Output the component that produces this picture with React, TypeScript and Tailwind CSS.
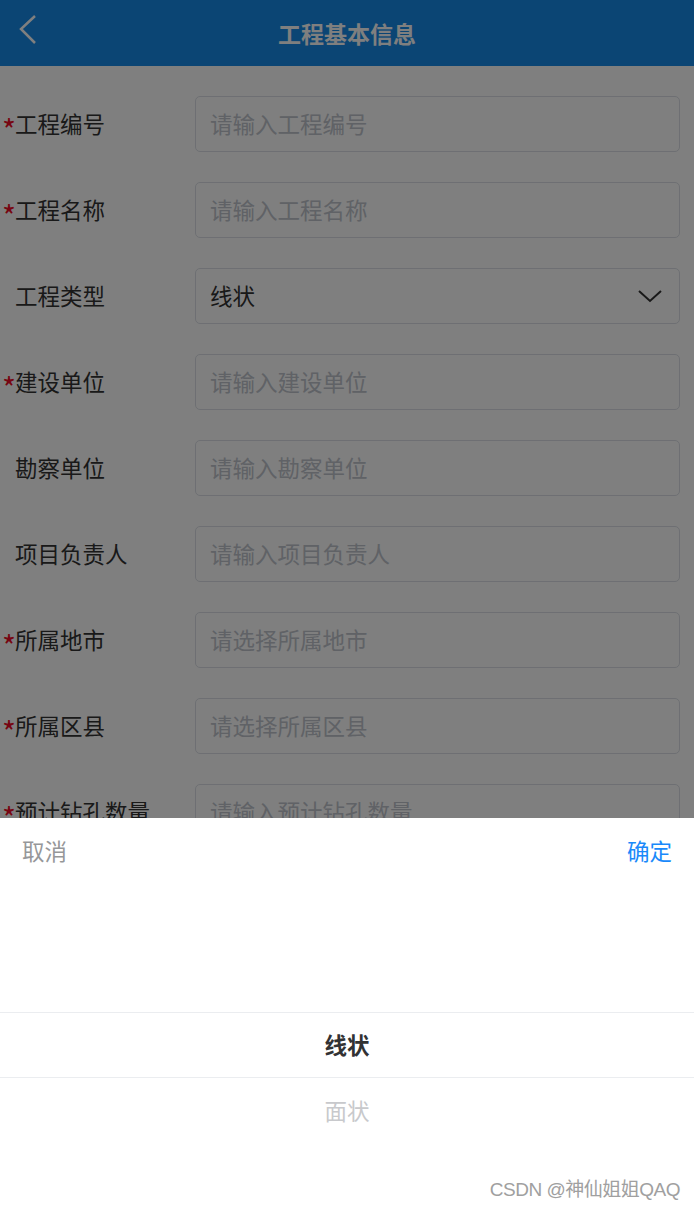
import React from "react";

const font = { fontFamily: '"Noto Sans CJK SC", "Noto Sans", sans-serif' };

type Field = {
  label: string;
  required?: boolean;
  placeholder?: string;
  value?: string;
  select?: boolean;
};

const fields: Field[] = [
  { label: "工程编号", required: true, placeholder: "请输入工程编号" },
  { label: "工程名称", required: true, placeholder: "请输入工程名称" },
  { label: "工程类型", value: "线状", select: true },
  { label: "建设单位", required: true, placeholder: "请输入建设单位" },
  { label: "勘察单位", placeholder: "请输入勘察单位" },
  { label: "项目负责人", placeholder: "请输入项目负责人" },
  { label: "所属地市", required: true, placeholder: "请选择所属地市" },
  { label: "所属区县", required: true, placeholder: "请选择所属区县" },
  { label: "预计钻孔数量", required: true, placeholder: "请输入预计钻孔数量" },
  { label: "备注", placeholder: "请输入备注" },
];

const FormRow = ({ field }: { field: Field }) => (
  <div className="flex h-[86px] items-center pr-[14px]">
    <div className="relative w-[195px] shrink-0 pl-[15px] text-[22.5px] text-[#333]">
      {field.required && (
        <span className="absolute left-[2px] top-[calc(50%-10px)] h-[30px] text-[30px] leading-none text-[#ee0a24]">
          *
        </span>
      )}
      {field.label}
    </div>
    <div className="flex h-[56px] flex-1 items-center justify-between rounded-[5px] border border-[#dcdfe6] bg-white px-[14px] text-[22.5px]">
      {field.value ? (
        <span className="text-[#333]">{field.value}</span>
      ) : (
        <span className="text-[#c0c4cc]">{field.placeholder}</span>
      )}
      {field.select && (
        <svg width="26" height="16" viewBox="0 0 26 16" className="mr-[2px]">
          <polyline points="2,3 13,13 24,3" fill="none" stroke="#333" strokeWidth="2" />
        </svg>
      )}
    </div>
  </div>
);

const App = () => {
  return (
    <div className="relative h-[1210px] w-full overflow-hidden bg-white" style={font}>
      <div className="relative flex h-[66px] items-center justify-center bg-[#168ae8]">
        <svg width="20" height="30" viewBox="0 0 20 30" className="absolute left-[18px] top-[15px]">
          <polyline points="17,1 3,14 17,28" fill="none" stroke="#fff" strokeWidth="2.5" />
        </svg>
        <h1 className="text-[23px] font-bold text-white">工程基本信息</h1>
      </div>

      <div className="pt-[15px]">
        {fields.map((f) => (
          <FormRow key={f.label} field={f} />
        ))}
      </div>

      <div className="absolute inset-0 bg-black/50" />

      <div className="absolute bottom-0 left-0 right-0 flex h-[392px] flex-col bg-white">
        <div className="flex h-[62px] items-center justify-between px-[22px] pt-[4px] text-[22.5px]">
          <span className="text-[#969799]">取消</span>
          <span className="text-[#1989fa]">确定</span>
        </div>
        <div className="flex flex-col text-[22.5px]">
          <div className="h-[66px]" />
          <div className="h-[66px]" />
          <div className="flex h-[66px] items-center justify-center border-y border-[#ebedf0] font-bold text-[#323233]">
            线状
          </div>
          <div className="flex h-[66px] items-center justify-center text-[#c8c9cc]">面状</div>
          <div className="h-[66px]" />
        </div>
        <div
          className="absolute bottom-[6px] right-[14px] text-[19px] text-[#a0a0a0]"
          style={{ fontFamily: '"Liberation Sans", "Noto Sans CJK SC", sans-serif', letterSpacing: "-0.5px" }}
        >
          CSDN @神仙姐姐QAQ
        </div>
      </div>
    </div>
  );
};

export default App;
